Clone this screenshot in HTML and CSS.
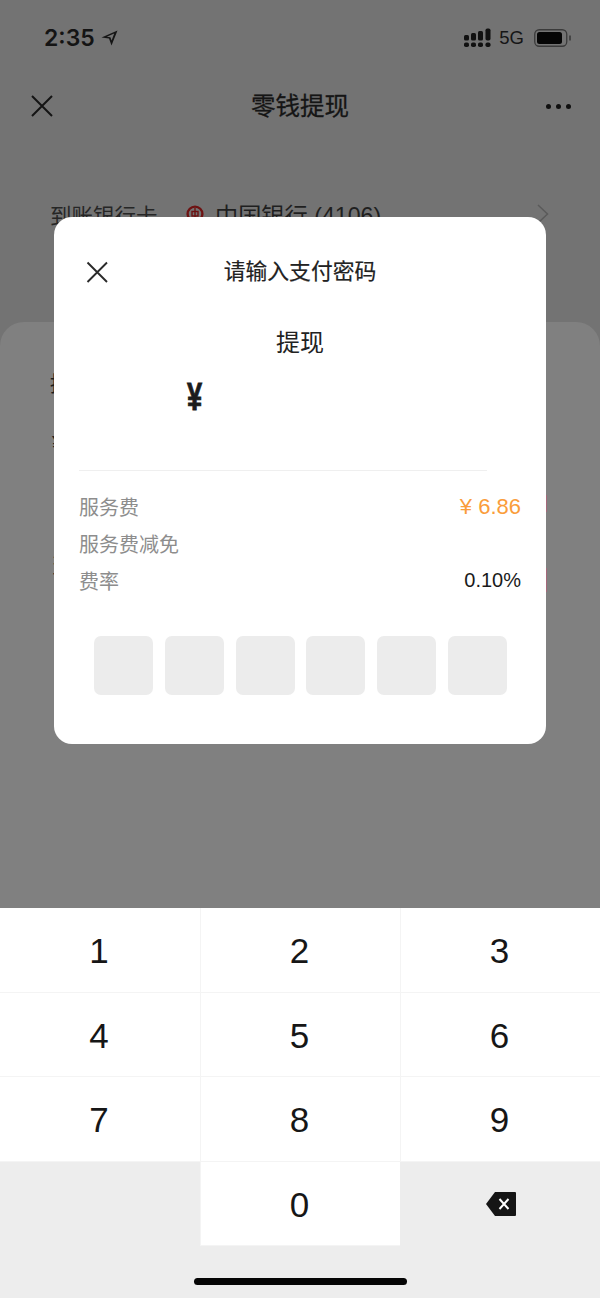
FILE: index.html
```html
<!DOCTYPE html>
<html lang="zh">
<head>
<meta charset="utf-8">
<title>零钱提现</title>
<link rel="stylesheet" href="styles.css">
</head>
<body>
<div class="phone">
  <div class="upper">
    <div class="statusbar">
      <div class="status-left">
        <span class="time">2:35</span>
        <svg class="loc" width="17" height="16" viewBox="0 0 17 16"><path d="M16.5 0.5 L0.5 7.5 L8 8.4 L10.5 15.5 Z M13.2 3.4 L5.8 6.7 L9.4 7.2 L10.6 10.6 Z" fill="#151515" fill-rule="evenodd"/></svg>
      </div>
      <div class="status-right">
        <svg width="27" height="20" viewBox="0 0 27 20"><g fill="#111"><rect x="0" y="7" width="5" height="5.5" rx="1.5"/><rect x="7" y="5" width="5" height="7.5" rx="1.5"/><rect x="14" y="3" width="5" height="9.5" rx="1.5"/><rect x="21.5" y="0.5" width="5" height="12" rx="1.8"/><rect x="0" y="14.5" width="5" height="4.5" rx="1.8"/><rect x="7" y="14.5" width="5" height="4.5" rx="1.8"/><rect x="14" y="14.5" width="5" height="4.5" rx="1.8"/><rect x="21.5" y="14.5" width="5" height="4.5" rx="1.8"/></g></svg>
        <span class="net">5G</span>
        <svg class="battery" width="38" height="20" viewBox="0 0 38 20"><rect x="0.75" y="1.75" width="32" height="16.5" rx="4.5" fill="none" stroke="#3a3a3a" stroke-width="1.3"/><rect x="3" y="4" width="25" height="12" rx="2.5" fill="#050505"/><path d="M36 7.5 v5" fill="none" stroke="#3a3a3a" stroke-width="1.6"/></svg>
      </div>
    </div>
    <div class="navbar">
      <svg class="nav-close" width="24" height="24" viewBox="0 0 24 24"><path d="M2 2 L22 22 M22 2 L2 22" stroke="#141414" stroke-width="2" fill="none"/></svg>
      <h1 class="nav-title">零钱提现</h1>
      <div class="nav-more"><i></i><i></i><i></i></div>
    </div>
    <div class="bank-row">
      <span class="bank-label">到账银行卡</span>
      <svg class="bank-logo" width="18" height="18" viewBox="0 0 18 18"><circle cx="9" cy="9" r="7.4" fill="none" stroke="#6e1212" stroke-width="2.4"/><rect x="6" y="6.5" width="6" height="4.5" fill="none" stroke="#6e1212" stroke-width="1.4"/><path d="M9 3v12" stroke="#6e1212" stroke-width="1.4"/></svg>
      <span class="bank-name">中国银行 (4106)</span>
      <svg class="bank-arrow" width="12" height="20" viewBox="0 0 12 20"><path d="M1 1 L10.5 10 L1 19" fill="none" stroke="#5a5a5a" stroke-width="1.5"/></svg>
    </div>
  </div>

  <div class="sheet">
    <div class="sheet-text sheet-a">提</div>
    <div class="sheet-text sheet-b">¥</div>
    <div class="sheet-text sheet-c">当</div>
    <span class="sheet-mark mark-a"></span>
    <span class="sheet-mark mark-b"></span>
  </div>

  <div class="modal">
    <div class="modal-head">
      <svg class="modal-close" width="24" height="24" viewBox="0 0 24 24"><path d="M2.5 2.5 L22 22 M22 2.5 L2.5 22" stroke="#2a2a2a" stroke-width="1.9" fill="none"/></svg>
      <h2 class="modal-title">请输入支付密码</h2>
    </div>
    <div class="modal-sub">提现</div>
    <div class="modal-amount"><span class="yen">¥</span></div>
    <div class="modal-rows">
      <div class="fee-row"><span class="fee-label">服务费</span><span class="fee-orange">¥ 6.86</span></div>
      <div class="fee-row"><span class="fee-label">服务费减免</span></div>
      <div class="fee-row"><span class="fee-label">费率</span><span class="fee-value">0.10%</span></div>
    </div>
    <div class="pin">
      <span class="pin-box"></span><span class="pin-box"></span><span class="pin-box"></span><span class="pin-box"></span><span class="pin-box"></span><span class="pin-box"></span>
    </div>
  </div>

  <div class="keyboard">
    <div class="key">1</div><div class="key">2</div><div class="key">3</div>
    <div class="key">4</div><div class="key">5</div><div class="key">6</div>
    <div class="key">7</div><div class="key">8</div><div class="key">9</div>
    <div class="key key-blank"></div>
    <div class="key">0</div>
    <div class="key key-blank">
      <svg width="32" height="26" viewBox="0 0 32 26"><path d="M11 1 H31 a1 1 0 0 1 1 1 V24 a1 1 0 0 1 -1 1 H11 L2 13 Z" fill="#151515"/><path d="M15.5 8 L24.5 18 M24.5 8 L15.5 18" stroke="#fff" stroke-width="2" fill="none"/></svg>
    </div>
  </div>
  <div class="home-indicator"></div>
</div>
</body>
</html>
```

FILE: styles.css
```css
* { box-sizing: border-box; }
html, body { margin: 0; padding: 0; }
body {
  width: 600px;
  height: 1298px;
  overflow: hidden;
  font-family: "Liberation Sans", "Noto Sans CJK SC", sans-serif;
  background: #737373;
}
.phone {
  position: relative;
  width: 600px;
  height: 1298px;
  background: #737373;
  overflow: hidden;
}
.upper { height: 322px; }
.statusbar {
  height: 76px;
  padding: 0 28px 0 44px;
  display: flex;
  align-items: center;
  justify-content: space-between;
}
.status-left { display: flex; align-items: center; gap: 6px; }
.time { font-family: Inter, "Liberation Sans", sans-serif; font-size: 23px; font-weight: 600; color: #141414; }
.loc { margin-top: -1px; }
.status-right { display: flex; align-items: center; gap: 8px; }
.net { font-size: 18.5px; color: #161616; }
.battery { margin-left: 2px; }
.navbar {
  height: 60px;
  padding: 0 29px 0 30px;
  display: flex;
  align-items: center;
  justify-content: space-between;
}
.nav-close { display: block; }
.nav-title {
  margin: -3px 0 0;
  font-size: 24.5px;
  font-weight: 400;
  color: #151515;
  -webkit-text-stroke: 0.3px #151515;
}
.nav-more { display: flex; gap: 5px; }
.nav-more i { width: 5px; height: 5px; border-radius: 50%; background: #101010; display: block; }
.bank-row {
  margin-top: 62px;
  padding: 0 51px 0 50px;
  height: 32px;
  display: flex;
  align-items: center;
  color: #1f1f1f;
}
.bank-label { font-size: 21.5px; width: 136px; color: #262626; }
.bank-logo { margin-right: 11px; }
.bank-name { font-size: 23.2px; flex: 1; }
.sheet {
  position: absolute;
  left: 0; right: 0;
  top: 322px;
  height: 586px;
  background: #808080;
  border-radius: 24px 24px 0 0;
}
.sheet-text { position: absolute; left: 50px; color: #1e1e1e; font-size: 21px; }
.sheet-a { top: 45px; }
.sheet-b { top: 109px; left: 52px; }
.sheet-c { top: 227px; left: 51px; }
.sheet-mark { position: absolute; left: 546px; width: 1px; background: #a5687a; }
.mark-a { top: 173px; height: 17px; }
.mark-b { top: 246px; height: 24px; }
.modal {
  position: absolute;
  left: 54px;
  top: 217px;
  width: 492px;
  height: 527px;
  background: #fff;
  border-radius: 18px;
  padding: 0 25px;
}
.modal-head {
  position: relative;
  height: 110px;
  padding-bottom: 5px;
  display: flex;
  align-items: center;
  justify-content: center;
}
.modal-close { position: absolute; left: 6px; top: 43px; }
.modal-title { margin: 0; font-size: 21.8px; font-weight: 400; color: #222; -webkit-text-stroke: 0.2px #222; }
.modal-sub { text-align: center; font-size: 24px; line-height: 32px; color: #222; }
.modal-amount {
  margin: 2px 34px 0 0;
  height: 110px;
  padding: 11px 0 0 108px;
  font-size: 34px;
  line-height: 50px;
  font-weight: 700;
  color: #1c1c1c;
  border-bottom: 1px solid #efefef;
}
.yen { display: inline-block; transform: scale(0.8, 1.12); transform-origin: left center; -webkit-text-stroke: 0.8px #1c1c1c; }
.modal-rows { padding-top: 17px; }
.fee-row {
  height: 37px;
  display: flex;
  align-items: center;
  justify-content: space-between;
  font-size: 20px;
}
.fee-label { color: #8d8d8d; }
.fee-orange { color: #fa9d3b; font-size: 22px; }
.fee-value { color: #1a1a1a; font-size: 20px; }
.pin {
  margin-top: 37px;
  padding: 0 14px 0 15px;
  display: flex;
  justify-content: space-between;
}
.pin-box { width: 59px; height: 59px; border-radius: 7px; background: #ececec; }
.keyboard {
  position: absolute;
  left: 0; right: 0;
  top: 908px;
  height: 390px;
  background: #ededed;
  display: grid;
  grid-template-columns: 200px 200px 200px;
  grid-auto-rows: 84.5px;
  align-content: start;
}
.key {
  background: #fff;
  display: flex;
  align-items: center;
  justify-content: center;
  padding: 3px 2px 0 0;
  font-size: 35px;
  color: #161616;
  border-left: 1px solid #f4f4f4;
  border-bottom: 1px solid #f4f4f4;
}
.key:nth-child(3n+1) { border-left: 0; }
.key-blank { background: #ededed; border: 0; padding: 0; }
.home-indicator {
  position: absolute;
  left: 194px;
  top: 1278px;
  width: 213px;
  height: 7px;
  border-radius: 4px;
  background: #050505;
}
```
